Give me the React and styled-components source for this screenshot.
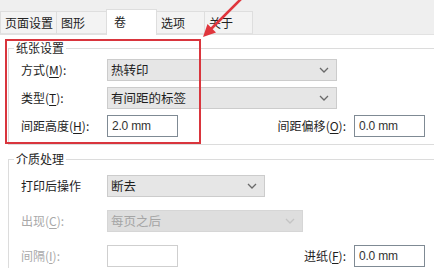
import React from "react";
import styled, { createGlobalStyle } from "styled-components";

const GlobalStyle = createGlobalStyle`
  body {
    margin: 0;
    background: #ffffff;
    font-family: "Noto Sans CJK SC", "Noto Sans", sans-serif;
    font-size: 12px;
    color: #1e1e1e;
  }
`;

const tabs = [
  { label: "页面设置", width: 57 },
  { label: "图形", width: 51 },
  { label: "卷", width: 51, active: true },
  { label: "选项", width: 49 },
  { label: "关于", width: 49 },
];

const Chevron = ({ disabled }) => (
  <svg width="10" height="6" viewBox="0 0 10 6">
    <polyline
      points="1,1 5,5 9,1"
      fill="none"
      stroke={disabled ? "#c4c4c4" : "#6a6a6a"}
      strokeWidth="1.3"
    />
  </svg>
);

const Select = ({ value, width, disabled }) => (
  <SelectBox $width={width} $disabled={disabled}>
    <span>{value}</span>
    <Chevron disabled={disabled} />
  </SelectBox>
);

const Label = ({ text, accel, disabled, width }) => (
  <LabelText $disabled={disabled} $width={width}>
    {text}
    {accel && (
      <>
        (<u>{accel}</u>):
      </>
    )}
  </LabelText>
);

const App = () => {
  return (
    <>
      <GlobalStyle />
      <Page>
        <TabBar>
          {tabs.map((t) => (
            <Tab key={t.label} $width={t.width} $active={t.active}>
              {t.label}
            </Tab>
          ))}
        </TabBar>

        <Group>
          <Legend>纸张设置</Legend>
          <Rows $gap={6}>
            <Row>
              <Label text="方式" accel="M" width={86} />
              <Select value="热转印" width={230} />
            </Row>
            <Row>
              <Label text="类型" accel="T" width={86} />
              <Select value="有间距的标签" width={230} />
            </Row>
            <Row>
              <Label text="间距高度" accel="H" width={86} />
              <TextInput>2.0 mm</TextInput>
              <Spacer />
              <Label text="间距偏移" accel="O" />
              <TextInput>0.0 mm</TextInput>
            </Row>
          </Rows>
        </Group>

        <Group $second>
          <Legend>介质处理</Legend>
          <Rows $gap={13}>
            <Row>
              <Label text="打印后操作" width={86} />
              <Select value="断去" width={158} />
            </Row>
            <Row>
              <Label text="出现" accel="C" width={86} disabled />
              <Select value="每页之后" width={196} disabled />
            </Row>
            <Row>
              <Label text="间隔" accel="I" width={86} disabled />
              <TextInput $disabled />
              <Spacer />
              <Label text="进纸" accel="F" />
              <TextInput>0.0 mm</TextInput>
            </Row>
          </Rows>
        </Group>

        <Highlight />
        <Arrow width="434" height="60" viewBox="0 0 434 60">
          <line
            x1="243"
            y1="-3"
            x2="210"
            y2="30"
            stroke="#e0363d"
            strokeWidth="2.6"
            strokeLinecap="round"
          />
          <polygon points="203,37 216,32.5 207.5,24" fill="#e0363d" />
        </Arrow>
      </Page>
    </>
  );
};

const Page = styled.div`
  position: relative;
  width: 434px;
  height: 268px;
  overflow: hidden;
  background: #ffffff;
`;

const TabBar = styled.div`
  display: flex;
  align-items: flex-end;
  height: 35px;
  box-sizing: border-box;
  background: #efefef;
  border-bottom: 1px solid #e2e2e2;
`;

const Tab = styled.div`
  box-sizing: border-box;
  width: ${(p) => p.$width}px;
  height: ${(p) => (p.$active ? 26 : 23)}px;
  margin-bottom: ${(p) => (p.$active ? -1 : 0)}px;
  padding: ${(p) => (p.$active ? "3px 0 0 7px" : "2px 0 0 4px")};
  background: ${(p) => (p.$active ? "#ffffff" : "#f3f3f3")};
  border: 1px solid #dedede;
  border-bottom: ${(p) => (p.$active ? "none" : "1px solid #e2e2e2")};
  margin-right: -1px;
  font-size: 12px;
  line-height: 18px;
  color: #222;
  white-space: nowrap;
`;

const Group = styled.fieldset`
  box-sizing: border-box;
  width: 430px;
  margin: ${(p) => (p.$second ? "5px" : "4px")} 0 0 8px;
  padding: ${(p) => (p.$second ? "7px" : "2px")} 13px 7px 12px;
  border: 1px solid #dcdcdc;
  border-right: none;
  min-inline-size: 0;
`;

const Legend = styled.legend`
  margin-left: -7px;
  padding: 0 2px;
  font-size: 12px;
  line-height: 18px;
  color: #1e1e1e;
`;

const Rows = styled.div`
  display: flex;
  flex-direction: column;
  gap: ${(p) => p.$gap}px;
`;

const Row = styled.div`
  display: flex;
  align-items: center;
  height: 22px;
`;

const LabelText = styled.span`
  flex: none;
  width: ${(p) => (p.$width ? `${p.$width}px` : "auto")};
  margin-right: ${(p) => (p.$width ? 0 : 8)}px;
  font-size: 12px;
  line-height: 18px;
  color: ${(p) => (p.$disabled ? "#a9a9a9" : "#1e1e1e")};
  white-space: nowrap;

  u {
    text-underline-offset: 2px;
  }
`;

const SelectBox = styled.div`
  box-sizing: border-box;
  display: flex;
  align-items: center;
  justify-content: space-between;
  width: ${(p) => p.$width}px;
  height: 22px;
  padding: 0 7px 0 3px;
  background: ${(p) => (p.$disabled ? "#dedede" : "#e6e6e6")};
  border: 1px solid ${(p) => (p.$disabled ? "#d6d6d6" : "#cccccc")};
  color: ${(p) => (p.$disabled ? "#a5a5a5" : "#1e1e1e")};
  font-size: 12.5px;
  line-height: 18px;
`;

const TextInput = styled.div`
  box-sizing: border-box;
  flex: none;
  width: 71px;
  height: 22px;
  padding: 0 4px;
  background: #ffffff;
  border: 1px solid ${(p) => (p.$disabled ? "#cfcfcf" : "#7f8a94")};
  font-family: "Liberation Sans", Arial, sans-serif;
  font-size: 12px;
  line-height: 20px;
  color: #333;
  letter-spacing: -0.2px;
`;

const Spacer = styled.div`
  flex: 1;
`;

const Highlight = styled.div`
  position: absolute;
  left: 5px;
  top: 39px;
  width: 196px;
  height: 105px;
  box-sizing: border-box;
  border: 2px solid #d9353d;
  pointer-events: none;
`;

const Arrow = styled.svg`
  position: absolute;
  left: 0;
  top: 0;
  pointer-events: none;
`;

export default App;
